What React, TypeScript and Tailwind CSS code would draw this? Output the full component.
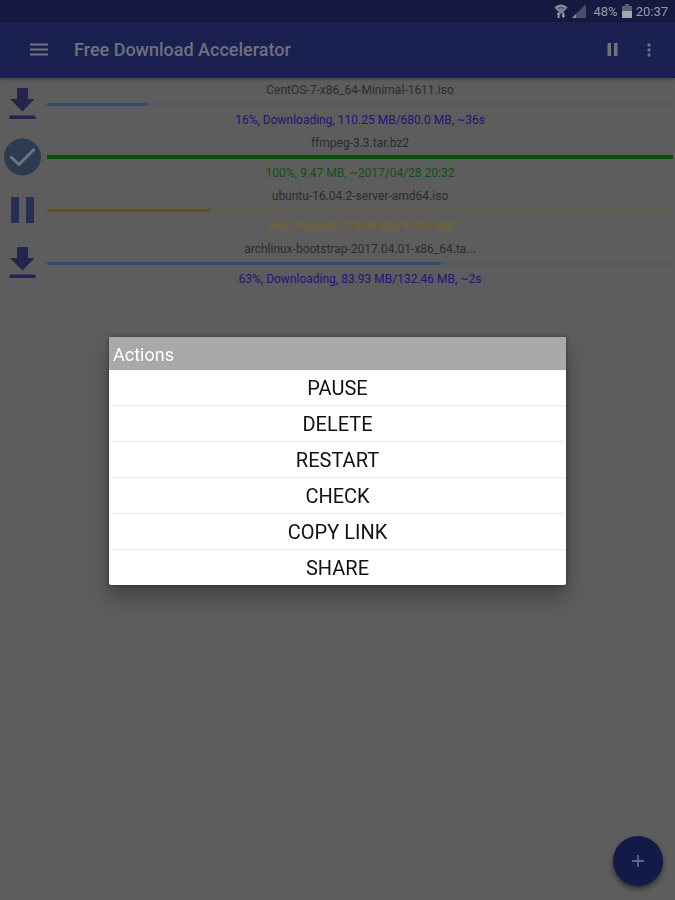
import React from "react";

type DownloadState = "active" | "done" | "paused";

interface Download {
  name: string;
  percent: number;
  status: string;
  state: DownloadState;
}

const downloads: Download[] = [
  { name: "CentOS-7-x86_64-Minimal-1611.iso", percent: 16, status: "16%, Downloading, 110.25 MB/680.0 MB, ~36s", state: "active" },
  { name: "ffmpeg-3.3.tar.bz2", percent: 100, status: "100%, 9.47 MB, ~2017/04/28 20:32", state: "done" },
  { name: "ubuntu-16.04.2-server-amd64.iso", percent: 26, status: "26%, Paused, 218.98 MB/829.0 MB", state: "paused" },
  { name: "archlinux-bootstrap-2017.04.01-x86_64.ta...", percent: 63, status: "63%, Downloading, 83.93 MB/132.46 MB, ~2s", state: "active" },
];

const actions = ["PAUSE", "DELETE", "RESTART", "CHECK", "COPY LINK", "SHARE"];

const styles = {
  active: { text: "text-[#21147a]", bar: "bg-[#344970]", track: "bg-[#565860]", height: "h-[3px]" },
  done: { text: "text-[#0f5210]", bar: "bg-[#0b4d0b]", track: "bg-[#0b4d0b]", height: "h-1" },
  paused: { text: "text-[#786429]", bar: "bg-[#6b4f0e]", track: "bg-[#625e4c]", height: "h-[3px]" },
};

function StateIcon({ state }: { state: DownloadState }) {
  if (state === "done") {
    return (
      <svg width="38" height="38" viewBox="0 0 38 38" aria-hidden="true">
        <circle cx="19.500" cy="19" r="18.500" fill="#2b3b50" />
        <path d="M7.500 18.500l8.500 8L31.500 11" fill="none" stroke="#707478" strokeWidth="3" />
      </svg>
    );
  }
  if (state === "paused") {
    return (
      <svg width="38" height="38" viewBox="0 0 38 38" aria-hidden="true">
        <path d="M8 6h8v26H8zM23 6h8v26h-8z" fill="#272f52" />
      </svg>
    );
  }
  return (
    <svg width="38" height="38" viewBox="0 0 38 38" aria-hidden="true">
      <path d="M14 3h11v11h6.500L19.500 26.500 7 14h7zM6.500 30.500h26V34h-26z" fill="#232450" />
    </svg>
  );
}

function StatusBar() {
  return (
    <div className="flex h-[22px] items-center justify-end bg-[#141a40] pr-[7px] text-[13px] leading-none text-[#9699a8]">
      <svg width="14" height="14" viewBox="0 0 14 14" className="mr-1" aria-hidden="true">
        <path d="M1 3.500Q7-1.500 13 3.500L7 9.500z" fill="#777a88" stroke="#a0a2ac" strokeWidth="1" />
        <path d="M4 4.500Q7 2.500 10 4.500" fill="none" stroke="#4b4f66" />
        <path d="M4.500 8L2.500 10.500h1.200V14h1.800v-3.500h1.200zM9.500 14l2-2.500h-1.200V8.500H8.500v3H7.300z" fill="#a0a2ac" />
      </svg>
      <svg width="14" height="14" viewBox="0 0 14 14" className="mr-[7px]" aria-hidden="true">
        <path d="M14 0v14H0z" fill="#4a4e66" />
        <path d="M4 10v4H0z" fill="#8b8e9b" />
      </svg>
      <span>48%</span>
      <svg width="10" height="14" viewBox="0 0 10 14" className="mx-1" aria-hidden="true">
        <path d="M3 0h4v2h3v5H0V2h3z" fill="#5c5f6c" />
        <path d="M0 7h10v7H0z" fill="#a3a5ad" />
      </svg>
      <span>20:37</span>
    </div>
  );
}

function AppBar() {
  return (
    <header className="flex h-14 items-center bg-[#1a2150] pr-3 pl-[26px] text-[#6f727b] shadow-[0_1px_3px_rgba(0,0,0,0.4)]">
      <button type="button" aria-label="Menu" className="flex size-[26px] items-center justify-center">
        <svg width="18" height="14" viewBox="0 0 18 14" fill="currentColor" aria-hidden="true">
          <path d="M0 .500h18v2H0zM0 5.500h18v2H0zM0 10.500h18v2H0z" />
        </svg>
      </button>
      <h1 className="ml-[22px] flex-1 text-lg font-medium">Free Download Accelerator</h1>
      <button type="button" aria-label="Pause all" className="flex size-7 items-center justify-center">
        <svg width="12" height="14" viewBox="0 0 12 14" fill="currentColor" aria-hidden="true">
          <path d="M.500 0H4v13H.500zM7 0h3.500v13H7z" />
        </svg>
      </button>
      <button type="button" aria-label="More options" className="ml-2 flex size-7 items-center justify-center">
        <svg width="4" height="14" viewBox="0 0 4 14" fill="currentColor" aria-hidden="true">
          <circle cx="2" cy="2" r="1.700" />
          <circle cx="2" cy="7" r="1.700" />
          <circle cx="2" cy="12" r="1.700" />
        </svg>
      </button>
    </header>
  );
}

function DownloadRow({ item }: { item: Download }) {
  const s = styles[item.state];
  return (
    <li className="flex h-[53px] items-start pr-[2px]">
      <div className="flex h-12 w-[47px] items-center pl-[3px]">
        <StateIcon state={item.state} />
      </div>
      <div className="min-w-0 flex-1 text-center text-xs">
        <p className="truncate leading-5 text-[#2c2c2c]">{item.name}</p>
        <div className="flex h-2 items-center">
          <div
            role="progressbar"
            aria-label={item.name}
            aria-valuenow={item.percent}
            className={`w-full ${s.height} ${s.track}`}
          >
            <div className={`h-full ${s.bar}`} style={{ width: `${item.percent}%` }} />
          </div>
        </div>
        <p className={`leading-6 ${s.text}`}>{item.status}</p>
      </div>
    </li>
  );
}

function ActionsDialog() {
  return (
    <div className="fixed inset-0 flex items-center justify-center px-[109px] pt-[22px]">
      <div
        role="dialog"
        aria-labelledby="actions-title"
        className="w-full overflow-hidden rounded-[2px] bg-white shadow-[0_12px_20px_rgba(0,0,0,0.3),0_0_4px_rgba(0,0,0,0.4)]"
      >
        <h2 id="actions-title" className="h-[33px] bg-[#a9a9a9] pl-1 text-lg leading-9 text-white">
          Actions
        </h2>
        <ul className="divide-y divide-[#ececec]">
          {actions.map((action) => (
            <li key={action}>
              <button type="button" className="block h-[35px] w-full text-center text-xl leading-9 text-[#111]">
                {action}
              </button>
            </li>
          ))}
        </ul>
      </div>
    </div>
  );
}

export default function App() {
  return (
    <div className="min-h-screen bg-[#5d5d5d] font-['Roboto',sans-serif]">
      <StatusBar />
      <AppBar />
      <main>
        <ul className="pt-[2px]">
          {downloads.map((item) => (
            <DownloadRow key={item.name} item={item} />
          ))}
        </ul>
      </main>
      <button
        type="button"
        aria-label="Add download"
        className="fixed right-3 bottom-[14px] flex size-[50px] items-center justify-center rounded-full bg-[#141a48] shadow-[0_3px_5px_rgba(0,0,0,0.5)]"
      >
        <svg width="14" height="14" viewBox="0 0 14 14" aria-hidden="true">
          <path d="M7 1v12M1 7h12" stroke="#7b7e90" strokeWidth="1.300" />
        </svg>
      </button>
      <ActionsDialog />
    </div>
  );
}
